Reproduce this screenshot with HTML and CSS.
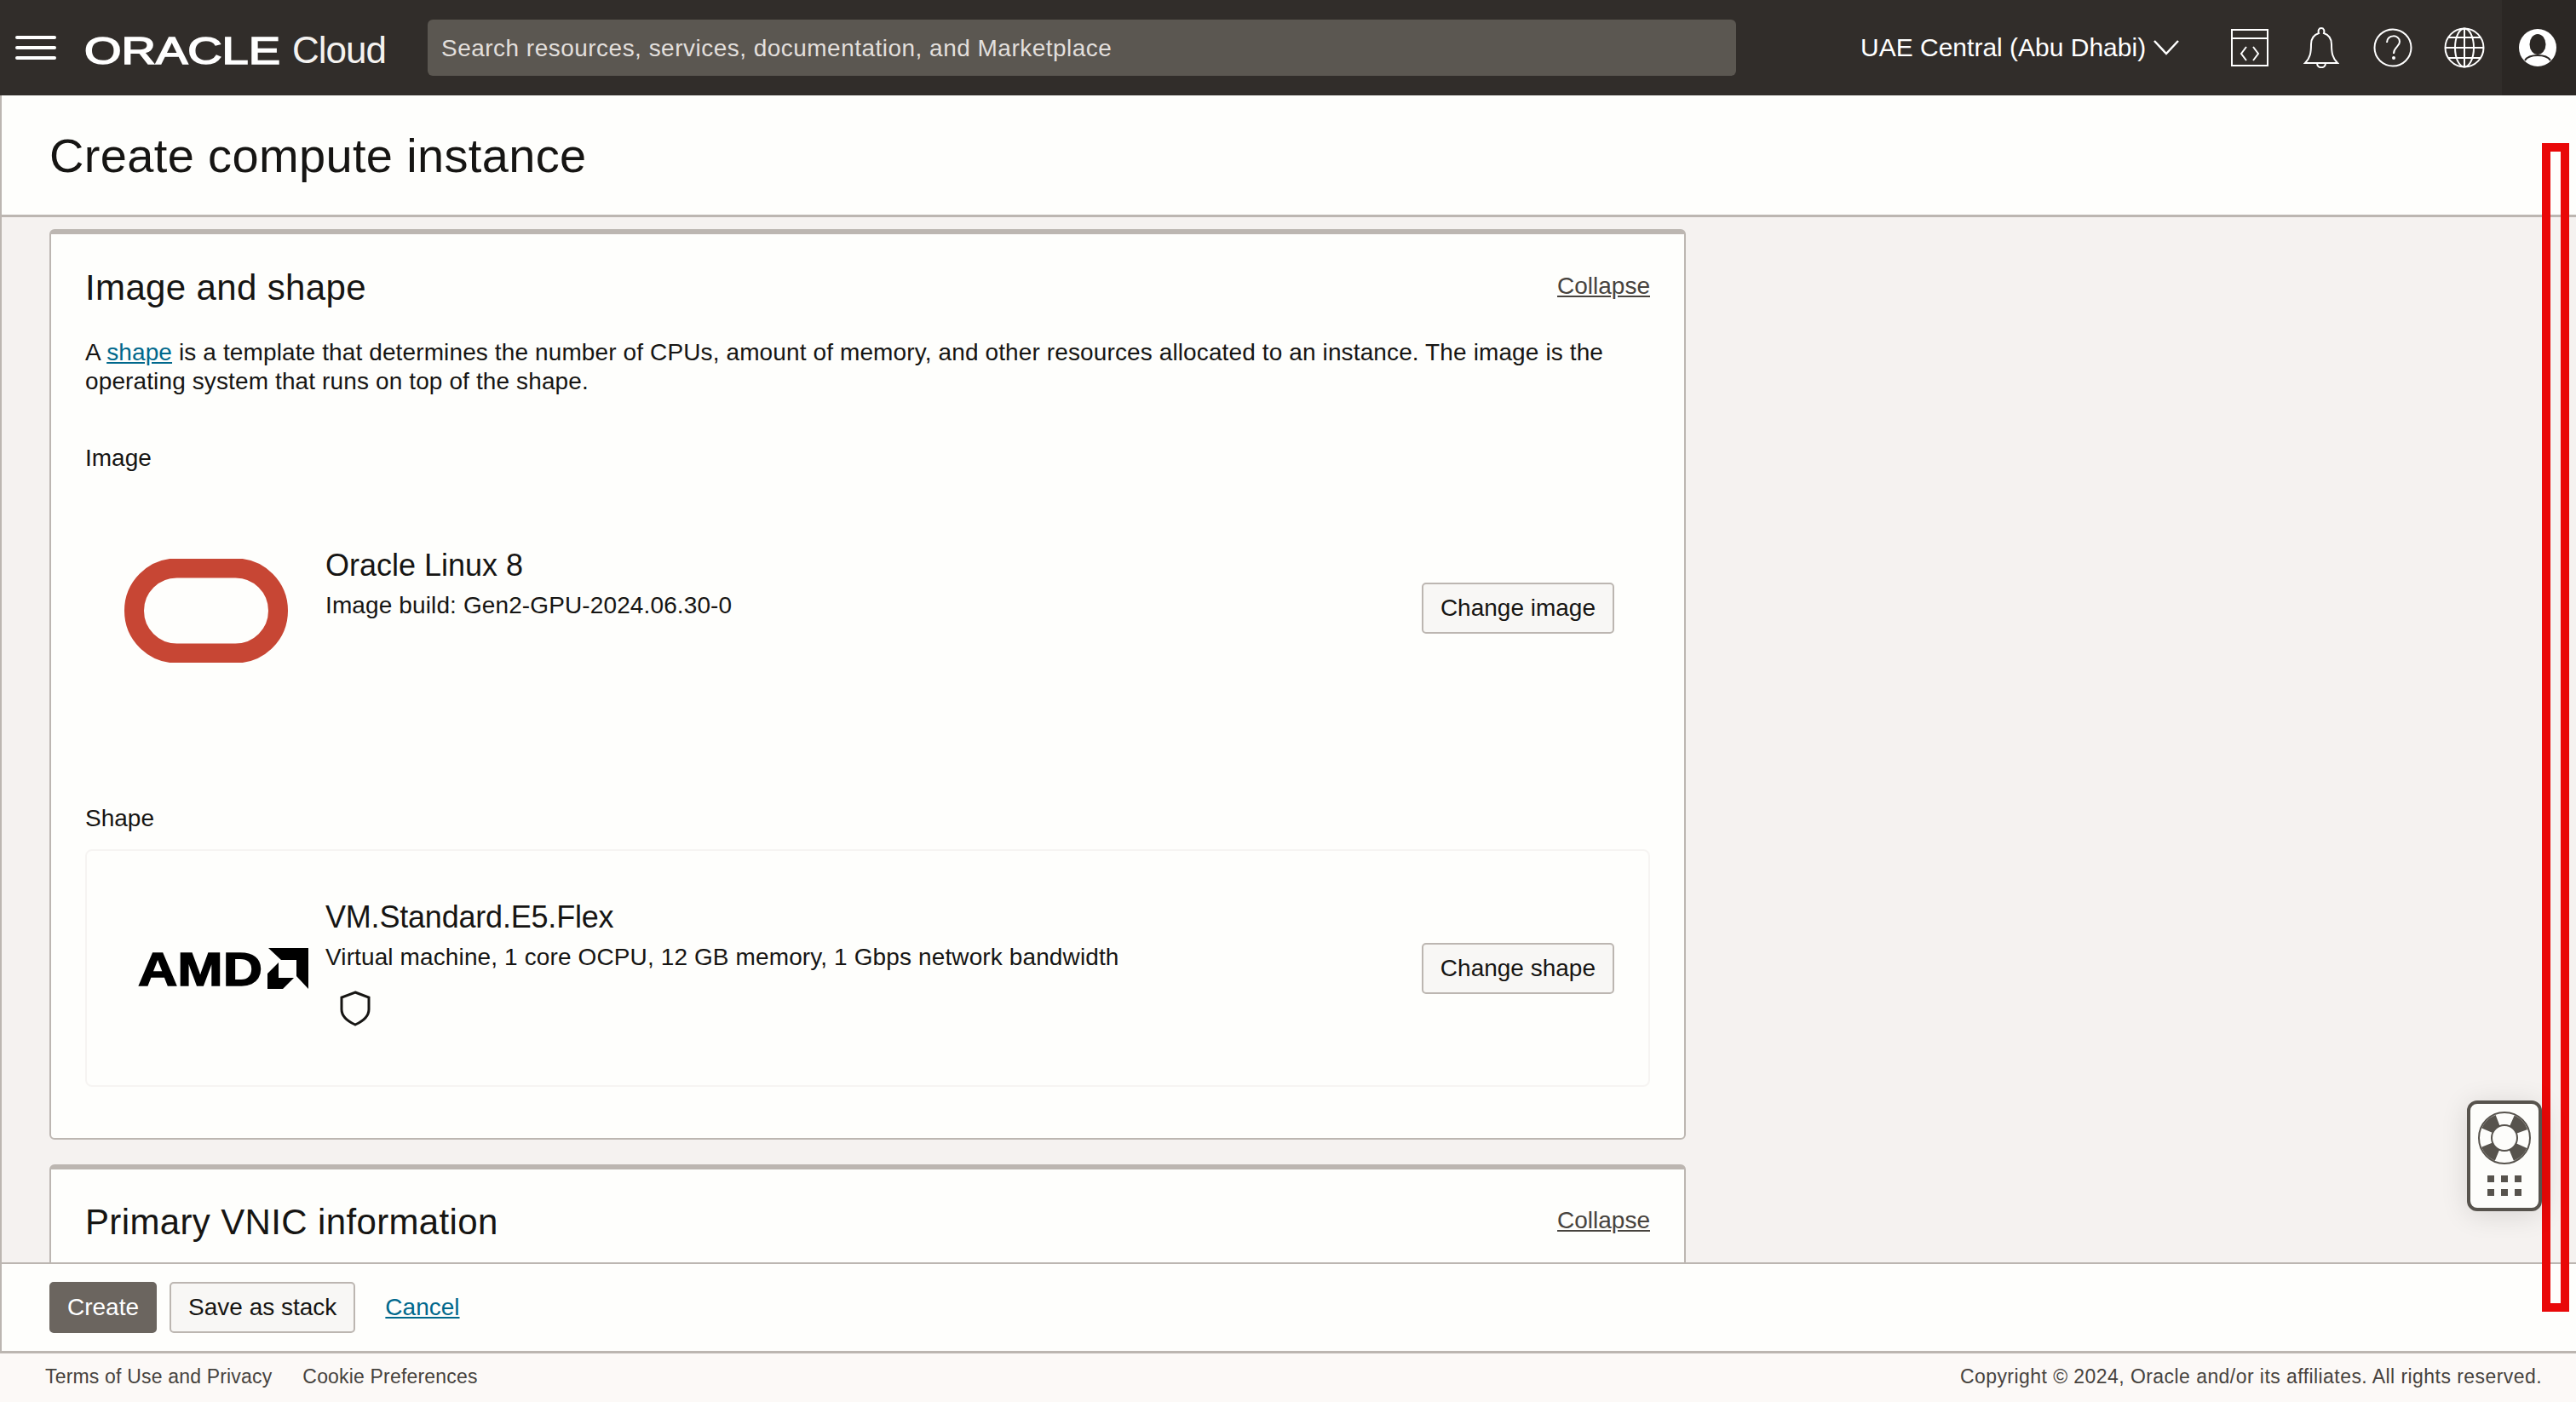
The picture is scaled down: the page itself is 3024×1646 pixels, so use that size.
FILE: index.html
```html
<!DOCTYPE html>
<html lang="en">
<head>
<meta charset="utf-8">
<title>Create compute instance</title>
<link rel="stylesheet" href="styles.css">
</head>
<body>
<header class="topbar">
  <button class="menu" aria-label="Menu"><span></span><span></span><span></span></button>
  <div class="brand">
    <svg class="wordmark" width="232" height="36" viewBox="0 0 232 36"><text x="1" y="33" textLength="230" lengthAdjust="spacingAndGlyphs">ORACLE</text></svg>
    <span class="cloud">Cloud</span>
  </div>
  <div class="search">Search resources, services, documentation, and Marketplace</div>
  <div class="region">UAE Central (Abu Dhabi)
    <svg width="30" height="18" viewBox="0 0 30 18"><path d="M1 1l14 15L29 1" fill="none" stroke="#fff" stroke-width="2.5"/></svg>
  </div>
  <nav class="tools">
    <span class="tool"><svg width="46" height="46" viewBox="0 0 46 46" fill="none" stroke="#fff" stroke-width="2"><rect x="2" y="2" width="42" height="42"/><path d="M2 12h42M19 22l-6 8 6 8M27 22l6 8-6 8"/></svg></span>
    <span class="tool"><svg width="42" height="48" viewBox="0 0 42 48" fill="none" stroke="#fff" stroke-width="2"><path d="M21 1c-3 0-4 3-3 6-6 2-9 7-9 13 0 10-1 16-7 22h38c-6-6-7-12-7-22 0-6-3-11-9-13 1-3 0-6-3-6zM16 42c0 7 10 7 10 0"/></svg></span>
    <span class="tool"><svg width="46" height="46" viewBox="0 0 46 46" fill="none" stroke="#fff" stroke-width="2"><circle cx="23" cy="23" r="21.5"/><path d="M16 17c0-10 15-10 15-1 0 6-7 6-7 14"/><circle cx="24" cy="35" r="1" /></svg></span>
    <span class="tool"><svg width="48" height="48" viewBox="0 0 48 48" fill="none" stroke="#fff" stroke-width="2"><circle cx="24" cy="24" r="22.5"/><ellipse cx="24" cy="24" rx="11" ry="22.5"/><path d="M24 1.500v45M1.500 24h45M5 12h38M5 36h38"/></svg></span>
    <span class="tool tool-user"><svg width="46" height="46" viewBox="0 0 46 46"><circle cx="23" cy="23" r="22" fill="#fff"/><ellipse cx="23" cy="19" rx="9.500" ry="12" fill="#2b2724"/><path d="M8 38c3-5 9-6 15-6s12 1 15 6" fill="none" stroke="#2b2724" stroke-width="2"/></svg></span>
  </nav>
</header>

<main class="page">
  <div class="page-title"><h1>Create compute instance</h1></div>
  <div class="content">
    <section class="card">
      <div class="card-head">
        <h2>Image and shape</h2>
        <a class="collapse" href="#">Collapse</a>
      </div>
      <p class="intro">A <a class="link" href="#">shape</a> is a template that determines the number of CPUs, amount of memory, and other resources allocated to an instance. The image is the operating system that runs on top of the shape.</p>
      <div class="field-label label-image">Image</div>
      <div class="tile tile-plain">
        <div class="tile-logo"><svg class="logo-oracle" width="192" height="122" viewBox="0 0 192 122"><rect x="11.500" y="11" width="169" height="100" rx="50" fill="none" stroke="#c74634" stroke-width="23"/></svg></div>
        <div class="tile-info info-image">
          <div class="tile-title">Oracle Linux 8</div>
          <div class="tile-desc">Image build: Gen2-GPU-2024.06.30-0</div>
        </div>
        <button class="btn">Change image</button>
      </div>
      <div class="field-label label-shape">Shape</div>
      <div class="tile">
        <div class="tile-logo"><svg class="logo-amd" width="200" height="48" viewBox="0 0 200 48"><text x="0" y="44" textLength="146" lengthAdjust="spacingAndGlyphs">AMD</text><path d="M153 0h47v48l-14-15V14h-18zM165 17l-13 13v18h18l13-13h-18z"/></svg></div>
        <div class="tile-info info-shape">
          <div class="tile-title">VM.Standard.E5.Flex</div>
          <div class="tile-desc">Virtual machine, 1 core OCPU, 12 GB memory, 1 Gbps network bandwidth</div>
          <svg class="shield" width="36" height="42" viewBox="0 0 36 42" fill="none" stroke="#161513" stroke-width="3"><path d="M18 2l16 6v14c0 9-7 14-16 18C9 36 2 31 2 22V8z"/></svg>
        </div>
        <button class="btn">Change shape</button>
      </div>
    </section>
    <section class="card card-next">
      <div class="card-head head-next">
        <h2>Primary VNIC information</h2>
        <a class="collapse" href="#">Collapse</a>
      </div>
    </section>
  </div>
  <div class="actions">
    <button class="btn btn-primary">Create</button>
    <button class="btn">Save as stack</button>
    <a class="link cancel" href="#">Cancel</a>
  </div>
</main>

<footer class="footer">
  <div class="footer-links"><span>Terms of Use and Privacy</span><span>Cookie Preferences</span></div>
  <div class="copyright">Copyright © 2024, Oracle and/or its affiliates. All rights reserved.</div>
</footer>

<div class="annotation" aria-hidden="true"></div>
<div class="help-widget">
  <svg width="62" height="62" viewBox="0 0 62 62">
    <circle cx="31" cy="31" r="30" fill="#fdfdfb" stroke="#57534d" stroke-width="2"/>
    <circle cx="31" cy="31" r="22" fill="none" stroke="#57534d" stroke-width="14" stroke-dasharray="17.500 17.055" stroke-dashoffset="8.750" transform="rotate(45 31 31)"/>
    <circle cx="31" cy="31" r="15" fill="#fdfdfb" stroke="#57534d" stroke-width="2"/>
  </svg>
  <div class="dots"><i></i><i></i><i></i><i></i><i></i><i></i></div>
</div>
</body>
</html>
```

FILE: styles.css
```css
* { box-sizing: border-box; }
html, body { margin: 0; height: 100%; }
body {
  height: 100vh;
  display: flex;
  flex-direction: column;
  overflow: hidden;
  position: relative;
  font-family: "Liberation Sans", Arial, sans-serif;
  color: #161513;
  background: #f5f2f0;
}
h1, h2, p { margin: 0; font-weight: 400; }

.topbar {
  flex: 0 0 112px;
  display: flex;
  align-items: center;
  background: #312d2a;
  color: #fff;
}
.menu {
  width: 48px;
  height: 28px;
  margin-left: 18px;
  padding: 0;
  border: 0;
  background: none;
  display: flex;
  flex-direction: column;
  justify-content: space-between;
}
.menu span { display: block; height: 4px; border-radius: 2px; background: #fff; }
.brand { width: 404px; margin-left: 32px; display: flex; align-items: center; gap: 13px; flex: 0 0 auto; padding-top: 8px; }
.wordmark { overflow: visible; }
.wordmark text { font: 400 44px "Liberation Sans", sans-serif; fill: #fff; stroke: #fff; stroke-width: 1.6px; }
.cloud { font-size: 44px; letter-spacing: -1px; line-height: 50px; color: #f4f2f0; margin-top: -2px; }
.search {
  width: 1536px;
  height: 66px;
  flex: 0 0 auto;
  display: flex;
  align-items: center;
  padding: 2px 0 0 16px;
  font-size: 28px;
  letter-spacing: .48px;
  border-radius: 6px;
  background: #5b5751;
  color: #e2dfdc;
}
.region {
  margin-left: 146px;
  display: flex;
  align-items: center;
  gap: 9px;
  width: 415px;
  flex: 0 0 auto;
  font-size: 30px;
  white-space: nowrap;
}
.tools { display: flex; height: 100%; margin-left: auto; }
.tool { width: 84px; display: flex; align-items: center; justify-content: center; }
.tool-user { width: 87px; margin-left: 2px; padding-right: 3px; background: #2b2724; }

.page { flex: 1; min-height: 0; display: flex; flex-direction: column; border-left: 2px solid #bcb6b1; }
.page-title {
  flex: 0 0 143px;
  padding: 0 0 0 56px;
  display: flex;
  align-items: center;
  background: #fefefc;
  border-bottom: 3px solid #bcb6b1;
}
h1 { font-size: 56px; letter-spacing: .35px; line-height: 70px; margin-top: 1px; }
.content { flex: 1; min-height: 0; overflow: hidden; padding: 14px 0 0 56px; }
.card {
  width: 1921px;
  height: 1069px;
  padding: 0 40px;
  background: #fefefc;
  border: 2px solid #bcb6b1;
  border-top-width: 6px;
  border-radius: 6px;
}
.card-next { margin-top: 29px; }
.card-head { height: 62px; margin-top: 30px; display: flex; justify-content: space-between; align-items: center; }
.head-next { margin-top: 29px; }
h2 { font-size: 42px; letter-spacing: .36px; padding-top: 3px; }
.collapse { font-size: 28px; color: #47433e; }
.intro { margin-top: 30px; font-size: 28px; line-height: 34px; letter-spacing: .12px; }
.link { color: #00688c; }
.field-label { font-size: 28px; line-height: 34px; }
.label-image { margin-top: 56px; }
.label-shape { margin-top: 88px; }
.tile {
  margin-top: 19px;
  height: 279px;
  display: flex;
  align-items: center;
  border: 2px solid #f6f4f2;
  border-radius: 8px;
}
.tile-plain { margin-top: 22px; border-color: transparent; }
.tile-plain .btn { margin-top: -5px; }
.tile-logo { flex: 0 0 280px; display: flex; }
.logo-oracle { margin-left: 44px; }
.logo-amd { margin-left: 60px; overflow: visible; }
.logo-amd text { font: 700 56px "Liberation Sans", sans-serif; stroke: #000; stroke-width: 1.5px; }
.tile-info { flex: 1; align-self: flex-start; }
.info-image { padding-top: 63px; }
.info-shape { padding-top: 56px; }
.info-shape .tile-title { letter-spacing: -.2px; }
.tile-title { font-size: 36px; line-height: 44px; }
.tile-desc { margin-top: 8px; font-size: 28px; line-height: 34px; letter-spacing: .12px; }
.shield { display: block; margin: 22px 0 0 17px; }

.btn {
  height: 60px;
  padding: 0 20px;
  font: 28px "Liberation Sans", sans-serif;
  color: #161513;
  background: #f8f7f5;
  border: 2px solid #bcb6b1;
  border-radius: 5px;
  flex: 0 0 auto;
}
.tile .btn { margin-right: 40px; }
.btn-primary { padding: 0 19px; background: #6b655f; border-color: #6b655f; color: #fff; }
.actions {
  flex: 0 0 107px;
  display: flex;
  align-items: center;
  gap: 15px;
  padding: 0 0 0 56px;
  background: #fefefc;
  border-top: 2px solid #bcb6b1;
  border-bottom: 3px solid #bcb6b1;
}
.cancel { margin-left: 20px; font-size: 28px; }

.footer {
  flex: 0 0 57px;
  display: flex;
  justify-content: space-between;
  align-items: center;
  padding: 0 40px 2px 53px;
  font-size: 23px;
  letter-spacing: .18px;
  color: #47433e;
  background: #fcf9f7;
}
.copyright { letter-spacing: .44px; }
.footer-links { display: flex; gap: 36px; }

.annotation {
  position: absolute;
  left: 2984px;
  top: 168px;
  width: 32px;
  height: 1372px;
  border: 10px solid #e90808;
}
.help-widget {
  position: absolute;
  left: 2896px;
  top: 1292px;
  width: 88px;
  height: 130px;
  padding-top: 9px;
  display: flex;
  flex-direction: column;
  align-items: center;
  background: #fdfdfb;
  border: 4px solid #57534d;
  border-radius: 12px;
  box-shadow: 0 4px 32px rgba(0,0,0,.12);
}
.dots { margin-top: 13px; display: grid; grid-template-columns: repeat(3, 8px); gap: 8px; }
.dots i { width: 8px; height: 8px; background: #57534d; }
```
